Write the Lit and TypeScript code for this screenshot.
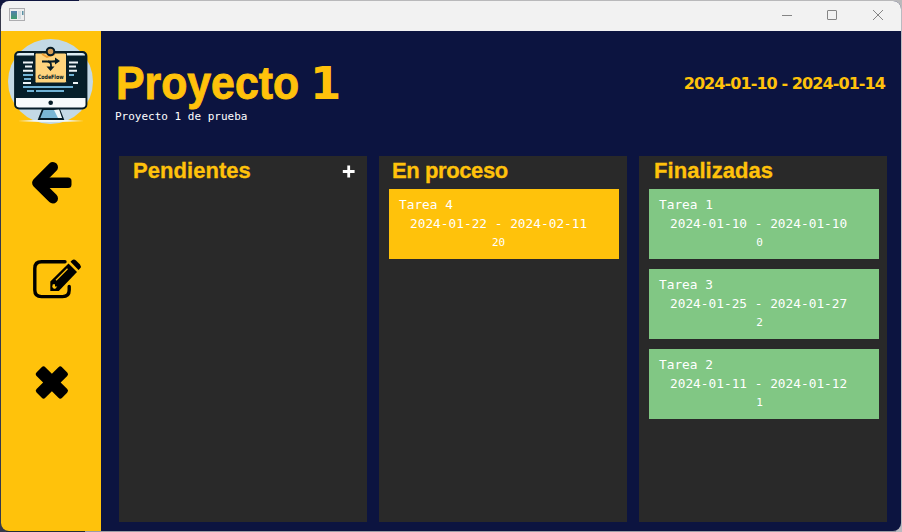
import { LitElement, html, css } from "lit";
import { customElement, property } from "lit/decorators.js";

interface Task { name: string; range: string; days: number; }
interface Column { title: string; tone: string; add?: boolean; tasks: Task[]; }

const columns: Column[] = [
  { title: "Pendientes", tone: "pending", add: true, tasks: [] },
  { title: "En proceso", tone: "active", tasks: [{ name: "Tarea 4", range: "2024-01-22 - 2024-02-11", days: 20 }] },
  {
    title: "Finalizadas", tone: "done", tasks: [
      { name: "Tarea 1", range: "2024-01-10 - 2024-01-10", days: 0 },
      { name: "Tarea 3", range: "2024-01-25 - 2024-01-27", days: 2 },
      { name: "Tarea 2", range: "2024-01-11 - 2024-01-12", days: 1 },
    ],
  },
];

@customElement("title-bar")
class TitleBar extends LitElement {
  static styles = css`
    :host { display: flex; height: 30px; background: #f2f2f2; justify-content: space-between; align-items: flex-start; }
    svg { display: block; }
    .app { margin: 7px 0 0 8px; }
    .controls { margin: 6px 14px 0 0; }
  `;
  render() {
    return html`
      <svg class="app" width="16" height="14" viewBox="0 0 16 14">
        <rect x=".5" y=".5" width="15" height="12" fill="#eeeeee" stroke="#adadb0"/>
        <defs><linearGradient id="g" x2="0" y2="1"><stop stop-color="#547fae"/><stop offset="1" stop-color="#3e9c6c"/></linearGradient></defs>
        <rect x="2" y="3" width="6" height="8" fill="url(#g)"/>
        <rect x="9" y="3" width="3" height="8" fill="#d3dde2"/>
        <rect x="13" y="3" width="1.5" height="4" fill="#5b91a4"/>
      </svg>
      <svg class="controls" width="106" height="14" viewBox="0 0 106 14" fill="none" stroke="#858585">
        <path d="M1 8.5H11"/>
        <rect x="46.5" y="3.5" width="9" height="9" rx=".5"/>
        <path d="M92 3L102 13M102 3L92 13"/>
      </svg>`;
  }
}

@customElement("side-bar")
class SideBar extends LitElement {
  static styles = css`
    :host { display: flex; flex-direction: column; width: 100px; background: #ffc20b; }
    svg { display: block; }
    .logo { margin: 7px 0 0 6px; }
    .back { margin: 34px 0 0 29px; }
    .edit { margin: 52px 0 0 31px; }
    .close { margin: 62px 0 0 33px; }
    .brand { font: 700 6px "DejaVu Sans", sans-serif; }
  `;
  render() {
    return html`
      <svg class="logo" width="88" height="88" viewBox="7 38 88 88">
        <circle cx="50.5" cy="81.5" r="42.5" fill="#c3d9e5"/>
        <path d="M18 121Q50 118 84 121Q50 123 18 121Z" fill="#eef7fa"/>
        <path d="M43 109H59L63 119H39Z" fill="#79b6d5" stroke="#061c27" stroke-width="1.8"/>
        <path d="M54 110L58 118H62L59 109Z" fill="#eef7fa"/>
        <rect x="15" y="52" width="71.5" height="56.5" rx="4" fill="#061f2a" stroke="#061c27" stroke-width="1.8"/>
        <path d="M16.5 55.5V55Q16.5 53 19 53H34V55.5ZM67 55.5V53H82Q85 53 85 55.5Z" fill="#dcecf3"/>
        <path d="M16 98H85.5V104.5Q85.5 107.5 82 107.5H19.5Q16 107.5 16 104.5Z" fill="#f7fafb"/>
        <circle cx="50.7" cy="102.7" r="2.3" fill="#061c27"/>
        <g stroke="#edf4f7" stroke-width="2">
          <path d="M23 62.5H33M25 66.5H32M23 70.7H33M69 62.5H78M69 66.5H76M69 70.7H77M73 83H78M23 83H31"/>
        </g>
        <g stroke="#72b3d5" stroke-width="2">
          <path d="M23 75H33M24 79H31M69 75H74M23 87H73M27 91H34M36 91H64"/>
        </g>
        <rect x="35" y="53" width="31.5" height="30" rx="1.5" fill="#ffd47d" stroke="#061c27" stroke-width="1"/>
        <path d="M42 54L47 57L55 54" stroke="#ef9e32" stroke-width="2" fill="none"/>
        <circle cx="50.5" cy="51.5" r="3.8" fill="#d59a52" stroke="#061c27" stroke-width="2"/>
        <path d="M42 61.5H47Q51 61.5 51 65V69M48 61Q51 62 58 61" fill="none" stroke="#061c27" stroke-width="1.8"/>
        <path d="M55 57.5L60 61L55 64.5ZM46.5 66.5H54.5L50.5 71Z" fill="#061c27"/>
        <text class="brand" x="50.7" y="78.5" text-anchor="middle" textLength="26" lengthAdjust="spacingAndGlyphs" fill="#061c27">CodeFlow</text>
      </svg>
      <svg class="back" width="44" height="46" viewBox="30 160 44 46" fill="none" stroke="#000" stroke-width="10.2">
        <path d="M52.9 167.2L37.2 182.8L52.9 198.4" stroke-linecap="round" stroke-linejoin="round"/>
        <rect x="40" y="177.6" width="31.5" height="10.3" rx="3.5" fill="#000" stroke="none"/>
      </svg>
      <svg class="edit" width="52" height="44" viewBox="32 258 52 44">
        <path d="M65 261.8H41.5Q34.8 261.8 34.8 268.5V290Q34.8 296.6 41.5 296.6H62.5Q69.2 296.6 69.2 290V286.5" fill="none" stroke="#000" stroke-width="3.4" stroke-linecap="round"/>
        <path d="M50.3 281.5L68.5 263.5L77 272L58.8 291H50.3Z" fill="#000"/>
        <path d="M70.5 261.7L72 260.2Q74.2 258.8 76 260.6L80 264.5Q81.8 266.6 80 268.6L78.5 270Z" fill="#000"/>
        <path d="M56 280.2L67.5 268.8" stroke="#ffc20b" stroke-width="1.3"/>
        <path d="M52.8 284.2H55V286.5H57.3L55.3 288.8H53.8L52.2 287Z" fill="#ffc20b"/>
      </svg>
      <svg class="close" width="36" height="36" viewBox="34 364 36 36">
        <g transform="rotate(45 51.9 382.5)"><path d="M33.9 379Q33.9 376.3 36.4 376.3H45.7V367Q45.7 364.5 48.2 364.5H55.6Q58.1 364.5 58.1 367V376.3H67.4Q69.9 376.3 69.9 379V386Q69.9 388.7 67.4 388.7H58.1V398Q58.1 400.5 55.6 400.5H48.2Q45.7 400.5 45.7 398V388.7H36.4Q33.9 388.7 33.9 386Z"/></g>
      </svg>`;
  }
}

@customElement("task-column")
class TaskColumn extends LitElement {
  @property({ attribute: false }) column!: Column;
  static styles = css`
    :host { display: block; width: 248px; background: #292929; }
    .head { display: flex; justify-content: space-between; height: 33px; padding: 0 12px 0 14px; box-sizing: border-box; }
    .head.active { padding-left: 13px; }
    .head.done { padding-left: 15px; }
    .title { font: 700 22px/30px "Liberation Sans", sans-serif; color: #ffc20b; white-space: nowrap; -webkit-text-stroke: .3px #ffc20b; }
    .pending .title { letter-spacing: .05px; }
    .active .title { letter-spacing: -.4px; }
    .done .title { letter-spacing: .05px; }
    .plus { display: block; margin-top: 9px; }
    .list { display: flex; flex-direction: column; gap: 10px; padding: 0 8px 0 10px; }
    .card { height: 70px; box-sizing: border-box; padding-top: 6px; color: #fff; font: 12.8px/19px "DejaVu Sans Mono", monospace; white-space: pre; }
    .card.active { background: #ffc20b; }
    .card.done { background: #81c784; }
    .name { padding-left: 10px; }
    .range { padding-left: 21px; }
    .days { text-align: center; font-size: 11px; line-height: 20px; padding-right: 11px; }
    .done .days { padding-right: 9px; }
  `;
  render() {
    const c = this.column;
    return html`
      <div class="head ${c.tone}">
        <span class="title">${c.title}</span>
        ${c.add ? html`<svg class="plus" width="13" height="13" viewBox="0 0 13 13"><path d="M6.7 .5V12.5M.8 6.5H12.6" stroke="#fff" stroke-width="2.8"/></svg>` : ""}
      </div>
      <div class="list">
        ${c.tasks.map(t => html`<div class="card ${c.tone}"><div class="name">${t.name}</div><div class="range">${t.range}</div><div class="days">${t.days}</div></div>`)}
      </div>`;
  }
}

@customElement("app-root")
class AppRoot extends LitElement {
  static styles = css`
    :host { display: block; width: 902px; height: 532px; box-sizing: border-box; padding: 1px; overflow: hidden;
      background: linear-gradient(90deg, #101640 79px, #b9b9bb 79px) top / 100% 9px no-repeat,
        linear-gradient(90deg, #242d35 79px, #9b9ca5 79px) bottom / 890px 9px no-repeat,
        linear-gradient(90deg, #36394b 50%, #b9bac0 50%); }
    .window { display: flex; flex-direction: column; width: 900px; height: 530px; overflow: hidden; border-radius: 8px; background: #0c1440; }
    .body { display: flex; flex: 1; }
    .main { flex: 1; display: flex; flex-direction: column; }
    .header { display: flex; justify-content: space-between; height: 125px; padding: 0 16px 0 14px; box-sizing: border-box; }
    .title { display: flex; height: 54px; margin-top: 25px; font: 700 46px/54px "Liberation Sans", sans-serif; color: #ffc20b; white-space: pre; }
    .word { width: 194px; margin-left: 1px; transform: scaleX(.93); transform-origin: 0 0; -webkit-text-stroke: .9px #ffc20b; }
    .number { font: 700 45px/56px "DejaVu Sans", sans-serif; }
    .desc { font: 11px/14px "DejaVu Sans Mono", monospace; color: #fff; }
    .dates { margin-top: 43px; font: 700 16px/20px "DejaVu Sans", sans-serif; letter-spacing: -.92px; color: #ffc20b; white-space: nowrap; }
    .board { display: flex; gap: 12px; height: 366px; padding-left: 18px; }
  `;
  render() {
    return html`
      <div class="window">
        <title-bar></title-bar>
        <div class="body">
          <side-bar></side-bar>
          <div class="main">
            <div class="header">
              <div><div class="title"><span class="word">Proyecto </span><span class="number">1</span></div><div class="desc">Proyecto 1 de prueba</div></div>
              <div class="dates">2024-01-10 - 2024-01-14</div>
            </div>
            <div class="board">${columns.map(c => html`<task-column .column=${c}></task-column>`)}</div>
          </div>
        </div>
      </div>`;
  }
}
